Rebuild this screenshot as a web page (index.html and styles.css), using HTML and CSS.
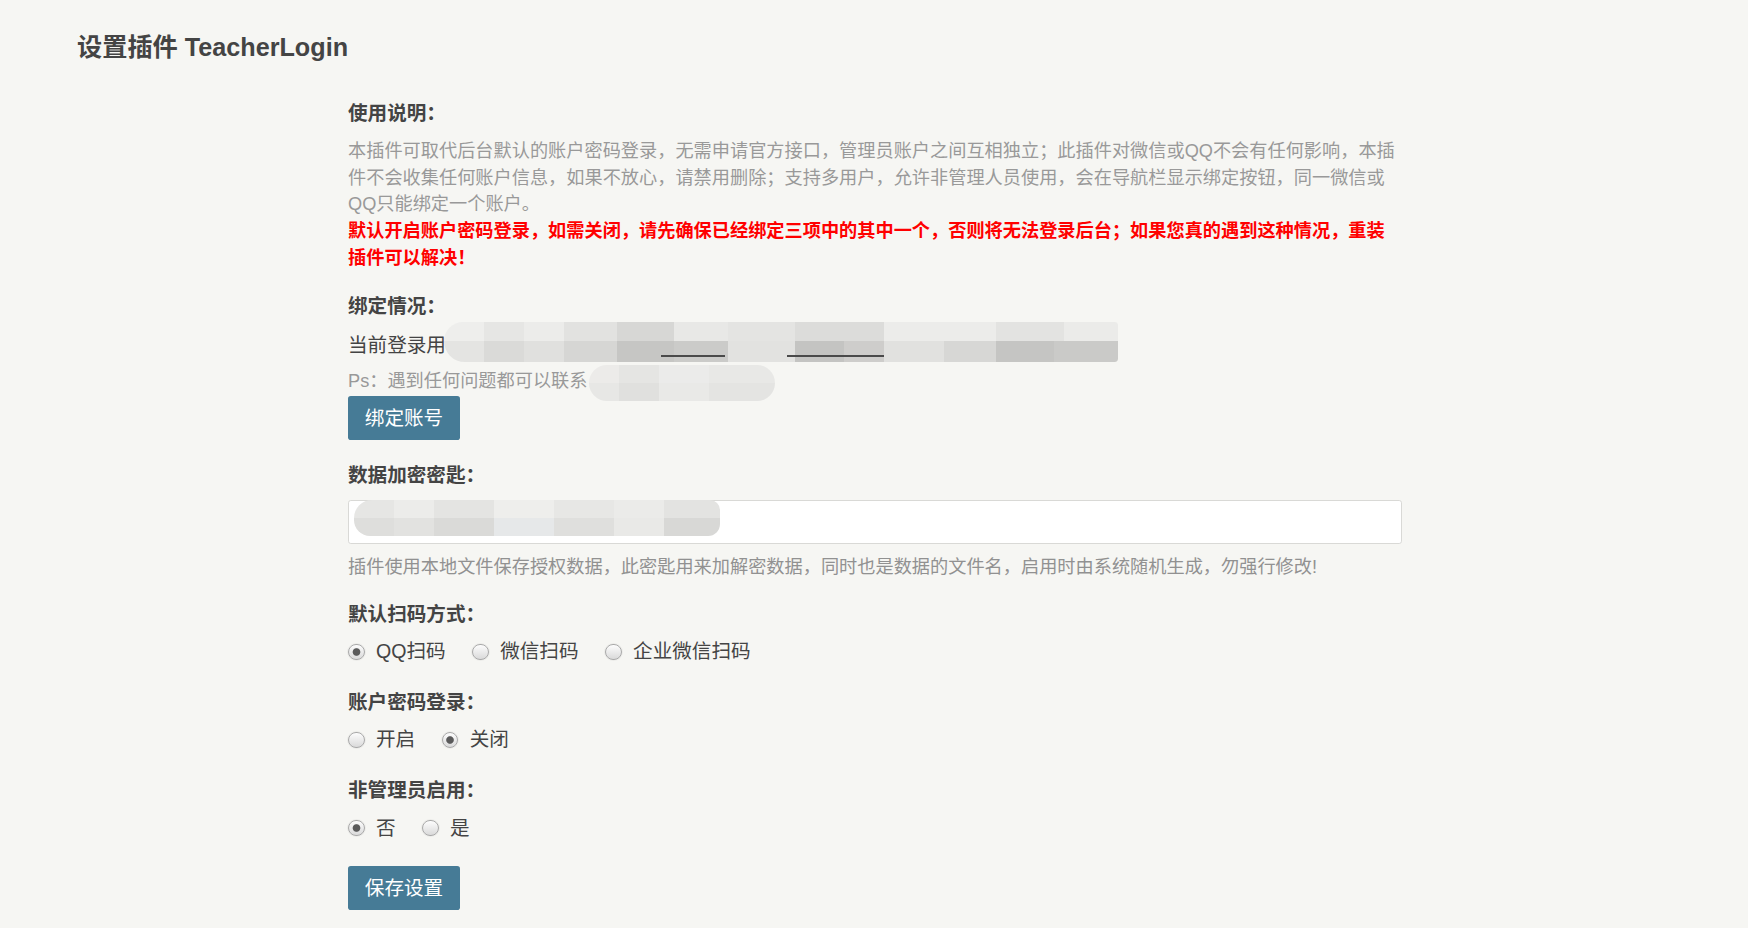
FILE: index.html
```html
<!DOCTYPE html>
<html lang="zh-CN">
<head>
<meta charset="utf-8">
<title>设置插件 TeacherLogin</title>
<link rel="stylesheet" href="styles.css">
</head>
<body>
<div class="page">
  <h2 class="page-title">设置插件 TeacherLogin</h2>
  <form class="form">
    <div class="option option-intro">
      <label class="label">使用说明：</label>
      <p class="desc">本插件可取代后台默认的账户密码登录，无需申请官方接口，管理员账户之间互相独立；此插件对微信或QQ不会有任何影响，本插件不会收集任何账户信息，如果不放心，请禁用删除；支持多用户，允许非管理人员使用，会在导航栏显示绑定按钮，同一微信或QQ只能绑定一个账户。<br><span class="warn">默认开启账户密码登录，如需关闭，请先确保已经绑定三项中的其中一个，否则将无法登录后台；如果您真的遇到这种情况，重装插件可以解决！</span></p>
    </div>

    <div class="option option-bind">
      <label class="label">绑定情况：</label>
      <p class="line">当前登录用<span class="blur blur-user"></span></p>
      <p class="desc ps">Ps：遇到任何问题都可以联系<span class="blur blur-contact"></span></p>
      <button type="button" class="btn">绑定账号</button>
    </div>

    <div class="option">
      <label class="label">数据加密密匙：</label>
      <div class="input-wrap">
        <input class="text" type="text" value="">
        <span class="blur blur-key"></span>
      </div>
      <p class="desc hint">插件使用本地文件保存授权数据，此密匙用来加解密数据，同时也是数据的文件名，启用时由系统随机生成，勿强行修改!</p>
    </div>

    <div class="option option-radio">
      <label class="label">默认扫码方式：</label>
      <div class="radios">
        <span class="choice"><input class="radio" type="radio" name="scan" checked><label>QQ扫码</label></span>
        <span class="choice"><input class="radio" type="radio" name="scan"><label>微信扫码</label></span>
        <span class="choice"><input class="radio" type="radio" name="scan"><label>企业微信扫码</label></span>
      </div>
    </div>

    <div class="option option-radio">
      <label class="label">账户密码登录：</label>
      <div class="radios">
        <span class="choice"><input class="radio" type="radio" name="pwd"><label>开启</label></span>
        <span class="choice"><input class="radio" type="radio" name="pwd" checked><label>关闭</label></span>
      </div>
    </div>

    <div class="option option-radio">
      <label class="label">非管理员启用：</label>
      <div class="radios">
        <span class="choice"><input class="radio" type="radio" name="nonadmin" checked><label>否</label></span>
        <span class="choice"><input class="radio" type="radio" name="nonadmin"><label>是</label></span>
      </div>
    </div>

    <div class="submit">
      <button type="button" class="btn">保存设置</button>
    </div>
  </form>
</div>
</body>
</html>
```

FILE: styles.css
```css
html, body {
  margin: 0;
  padding: 0;
}

body {
  background: #f6f6f3;
  color: #444;
  font-family: "Liberation Sans", "Noto Sans CJK SC", sans-serif;
  font-size: 19.6px;
  line-height: 29.4px;
}

.page {
  padding: 0 61px;
}

.page-title {
  margin: 0;
  padding: 28px 16px 0;
  font-size: 25.2px;
  line-height: 38px;
  font-weight: bold;
  color: #444;
}

.form {
  margin: 0 0 0 287px;
  padding-top: 32.5px;
  width: 1054px;
}

.option {
  margin: 0 0 19.3px;
}

.option-intro {
  margin-bottom: 20.3px;
}

.option-bind {
  margin-bottom: 21px;
}

.option-radio {
  margin-bottom: 21.3px;
}

.label {
  display: block;
  font-weight: bold;
  margin-bottom: 10px;
}

.desc {
  margin: 0;
  color: #999;
  font-size: 18.2px;
  line-height: 26.75px;
}

.warn {
  color: #f00;
  font-weight: bold;
}

.line {
  margin: 0;
}

.ps {
  margin-top: 7.3px;
}

.btn {
  display: block;
  margin: 0;
  height: 44px;
  padding: 0 16.8px;
  border: none;
  border-radius: 2.8px;
  background: #467b96;
  color: #fff;
  font-family: inherit;
  font-size: 19.6px;
  line-height: 44px;
}

.input-wrap {
  position: relative;
  height: 44px;
}

.text {
  display: block;
  box-sizing: border-box;
  width: 100%;
  height: 44px;
  margin: 0;
  padding: 0 6px;
  border: 1px solid #d9d9d6;
  border-radius: 2.8px;
  background: #fff;
  font-family: inherit;
  font-size: 19.6px;
}

.hint {
  margin-top: 9.8px;
  color: #919191;
}

.radios {
  display: flex;
  align-items: center;
  gap: 26.5px;
  height: 29.4px;
  margin-top: -2px;
}

.choice {
  display: inline-flex;
  align-items: center;
}

.radio {
  -webkit-appearance: none;
  appearance: none;
  box-sizing: border-box;
  width: 16.5px;
  height: 16.5px;
  margin: 0 11.5px 0 0;
  border: 1px solid #a9a9a9;
  border-radius: 50%;
  background: linear-gradient(#fdfdfd, #dadada);
  box-shadow: 0 0 0 1px rgba(0, 0, 0, 0.04);
}

.radio:checked {
  background: radial-gradient(circle, #5a5a5a 0 3.3px, rgba(90, 90, 90, 0) 4.3px), linear-gradient(#fdfdfd, #dadada);
}

/* privacy smudges */
.blur {
  display: inline-block;
  vertical-align: middle;
  filter: blur(0.6px);
}

.blur-user {
  width: 674px;
  height: 40px;
  margin: -11px 0 -1px -2px;
  border-radius: 22px 4px 4px 24px;
  background:
    linear-gradient(90deg, transparent 0 217px, #4a4a4a 217px 281px, transparent 281px 343px, #4a4a4a 343px 440px, transparent 440px) 0 33px / 100% 2px no-repeat,
    linear-gradient(90deg, #eeeeec 0 40px, #e6e6e4 40px 80px, #ececea 80px 120px, #e2e2e0 120px 173px, #d7d7d5 173px 230px, #e8e8e6 230px 284px, #e4e4e2 284px 351px, #dcdcda 351px 440px, #ececea 440px 552px, #e3e3e1 552px 620px, #ebebe9 620px) 0 0 / 100% 19px no-repeat,
    linear-gradient(90deg, #e4e4e2 0 40px, #dadad8 40px 80px, #e0e0de 80px 120px, #d6d6d4 120px 173px, #c6c6c4 173px 230px, #cbcbc9 230px 284px, #e2e2e0 284px 351px, #c4c4c2 351px 400px, #cecdcb 400px 440px, #e1e1df 440px 500px, #d7d7d5 500px 552px, #c5c5c3 552px 610px, #cacac8 610px 674px) 0 19px / 100% 21px no-repeat;
}

.blur-contact {
  width: 186px;
  height: 36px;
  margin: -5px 0 -5px 2px;
  border-radius: 18px;
  background:
    linear-gradient(90deg, #ecebe9 0 30px, #e5e5e3 30px 70px, #ebebea 70px 120px, #e8e8e6 120px) 0 0 / 100% 50% no-repeat,
    linear-gradient(90deg, #e7e7e5 0 30px, #e0e0de 30px 70px, #e9e9e7 70px 120px, #e4e4e2 120px) 0 100% / 100% 50% no-repeat;
}

.blur-key {
  position: absolute;
  left: 6px;
  top: 0;
  width: 366px;
  height: 36px;
  border-radius: 18px 10px 12px 16px;
  background:
    linear-gradient(90deg, #e6e6e4 0 40px, #ececea 40px 80px, #e4e4e2 80px 140px, #eeeeec 140px 200px, #e7e7e5 200px 260px, #ebebe9 260px 310px, #e3e3e1 310px 366px) 0 0 / 100% 50% no-repeat,
    linear-gradient(90deg, #dededc 0 40px, #e2e2e0 40px 80px, #dadad8 80px 140px, #e6e8e9 140px 200px, #dfdfdd 200px 260px, #e9e9e7 260px 310px, #d8d8d6 310px 366px) 0 100% / 100% 50% no-repeat;
}

.submit {
  margin-top: 23px;
}
```
